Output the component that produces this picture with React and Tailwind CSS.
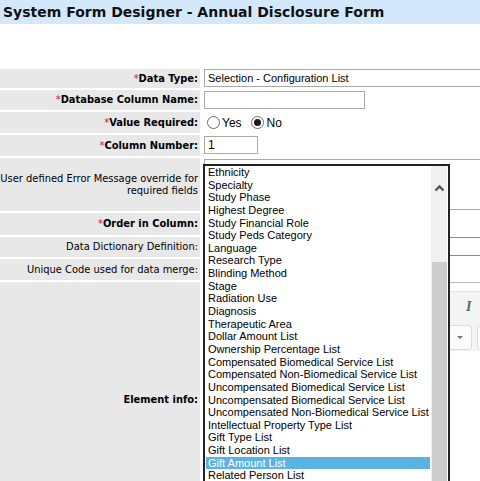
import React from "react";

const items = [
  "Ethnicity",
  "Specialty",
  "Study Phase",
  "Highest Degree",
  "Study Financial Role",
  "Study Peds Category",
  "Language",
  "Research Type",
  "Blinding Method",
  "Stage",
  "Radiation Use",
  "Diagnosis",
  "Therapeutic Area",
  "Dollar Amount List",
  "Ownership Percentage List",
  "Compensated Biomedical Service List",
  "Compensated Non-Biomedical Service List",
  "Uncompensated Biomedical Service List",
  "Uncompensated Biomedical Service List",
  "Uncompensated Non-Biomedical Service List",
  "Intellectual Property Type List",
  "Gift Type List",
  "Gift Location List",
  "Gift Amount List",
  "Related Person List",
];

function Label({ req, bold = true, children }) {
  return (
    <div
      className={`w-[200px] shrink-0 bg-[#e8e8e8] flex items-center justify-end pr-[2px] text-right text-[11px] leading-[12px] text-black font-['DejaVu_Sans_Condensed','DejaVu_Sans',sans-serif] ${
        bold ? "font-bold" : ""
      }`}
    >
      <span>
        {req && <span className="text-[#d0103a] font-normal">*</span>}
        {children}
      </span>
    </div>
  );
}

function Radio({ checked }) {
  return (
    <span className="w-[13px] h-[13px] rounded-full border border-[#6d6d6d] bg-white flex items-center justify-center">
      {checked && <span className="w-[7px] h-[7px] rounded-full bg-[#1a1a1a]" />}
    </span>
  );
}

export default function App() {
  return (
    <div className="w-[480px] h-[481px] overflow-hidden bg-white relative font-['DejaVu_Sans',Verdana,sans-serif]">
      <div className="h-[24px] bg-[#d4e8fc] pl-[3px] flex items-center text-[14px] font-bold text-[#111] whitespace-nowrap">
        System Form Designer - Annual Disclosure Form
      </div>
      <div className="h-[45px]" />
      <div className="flex flex-col gap-[2px]">
        <div className="flex h-[19px]">
          <Label req>Data Type:</Label>
          <div className="ml-[4px] w-[300px] h-[18px] border border-[#a9a9a9] pl-[3px] flex items-center text-[11px] font-['Liberation_Sans',Arial,sans-serif] text-black shrink-0 whitespace-nowrap">
            Selection - Configuration List
          </div>
        </div>
        <div className="flex h-[20px]">
          <Label req>Database Column Name:</Label>
          <div className="ml-[4px] mt-[1px] w-[161px] h-[18px] border border-[#a9a9a9]" />
        </div>
        <div className="flex h-[21px]">
          <Label req>Value Required:</Label>
          <div className="ml-[7px] flex items-center text-[12px] font-['Liberation_Sans',Arial,sans-serif] text-black">
            <Radio />
            <span className="ml-[2px] mr-[9px]">Yes</span>
            <Radio checked />
            <span className="ml-[3px]">No</span>
          </div>
        </div>
        <div className="flex h-[21px]">
          <Label req>Column Number:</Label>
          <div className="ml-[4px] mt-[1px] w-[54px] h-[18px] border border-[#a9a9a9] pl-[3px] flex items-center text-[12px] font-['Liberation_Sans',Arial,sans-serif]">
            1
          </div>
        </div>
        <div className="flex h-[53px]">
          <Label bold={false}>
            User defined Error Message override for
            <br />
            required fields
          </Label>
          <div className="ml-[4px] mt-[1px] w-[300px] h-[51px] border border-[#a9a9a9] shrink-0" />
        </div>
        <div className="flex h-[22px]">
          <Label req>Order in Column:</Label>
          <div className="ml-[4px] mt-[1px] w-[54px] h-[18px] border border-[#a9a9a9]" />
        </div>
        <div className="flex h-[20px]">
          <Label bold={false}>Data Dictionary Definition:</Label>
          <div className="ml-[4px] w-[300px] h-[19px] border border-[#8a8a8a] shrink-0" />
        </div>
        <div className="flex h-[21px]">
          <Label bold={false}>Unique Code used for data merge:</Label>
          <div className="ml-[4px] mt-[1px] w-[54px] h-[18px] border border-[#a9a9a9]" />
        </div>
        <div className="flex h-[236px]">
          <Label>Element info:</Label>
          <div className="ml-[4px] w-[320px] shrink-0 border-t border-[#b8b8b8]">
            <div className="mt-[8px] h-[60px] bg-[#f4f4f4] border-t border-[#e2e2e2] relative">
              <span className="absolute left-[262px] top-[4px] text-[14px] font-bold italic text-[#4e6b6b] font-['Liberation_Serif',serif]">
                I
              </span>
              <div className="absolute left-[236px] top-[33px] w-[32px] h-[25px] rounded-[3px] border border-[#dcdcdc] bg-[#fbfbfb] flex items-center justify-end pr-[8px]">
                <span className="w-0 h-0 border-l-[3px] border-r-[3px] border-t-[3px] border-l-transparent border-r-transparent border-t-[#777]" />
              </div>
              <div className="absolute left-[273px] top-[33px] w-[32px] h-[25px] rounded-[3px] border border-[#dcdcdc] bg-[#fbfbfb]" />
            </div>
          </div>
        </div>
      </div>

      {/* open dropdown list */}
      <div className="absolute left-[203px] top-[164px] w-[247px] h-[330px] border-2 border-[#222] bg-white">
        <div className="pl-[1px] pr-[18px] font-['Liberation_Sans',Arial,sans-serif] text-[11px] leading-[12.65px] text-black">
          {items.map((t, i) => (
            <div
              key={i}
              className={`pl-[2px] h-[12.65px] whitespace-nowrap ${
                t === "Gift Amount List" ? "bg-[#5bb3e3] text-white" : ""
              }`}
            >
              {t}
            </div>
          ))}
        </div>
        <div className="absolute right-[1px] top-0 bottom-0 w-[16px] bg-[#f0f0f0]">
          <svg className="absolute left-[3px] top-[18px]" width="11" height="8" viewBox="0 0 11 8">
            <polyline points="1.5,6.5 5.5,2.5 9.5,6.5" fill="none" stroke="#555" strokeWidth="2.4" />
          </svg>
          <div className="absolute left-[1px] right-0 top-[96px] bottom-0 bg-[#cdcdcd]" />
        </div>
      </div>
    </div>
  );
}
